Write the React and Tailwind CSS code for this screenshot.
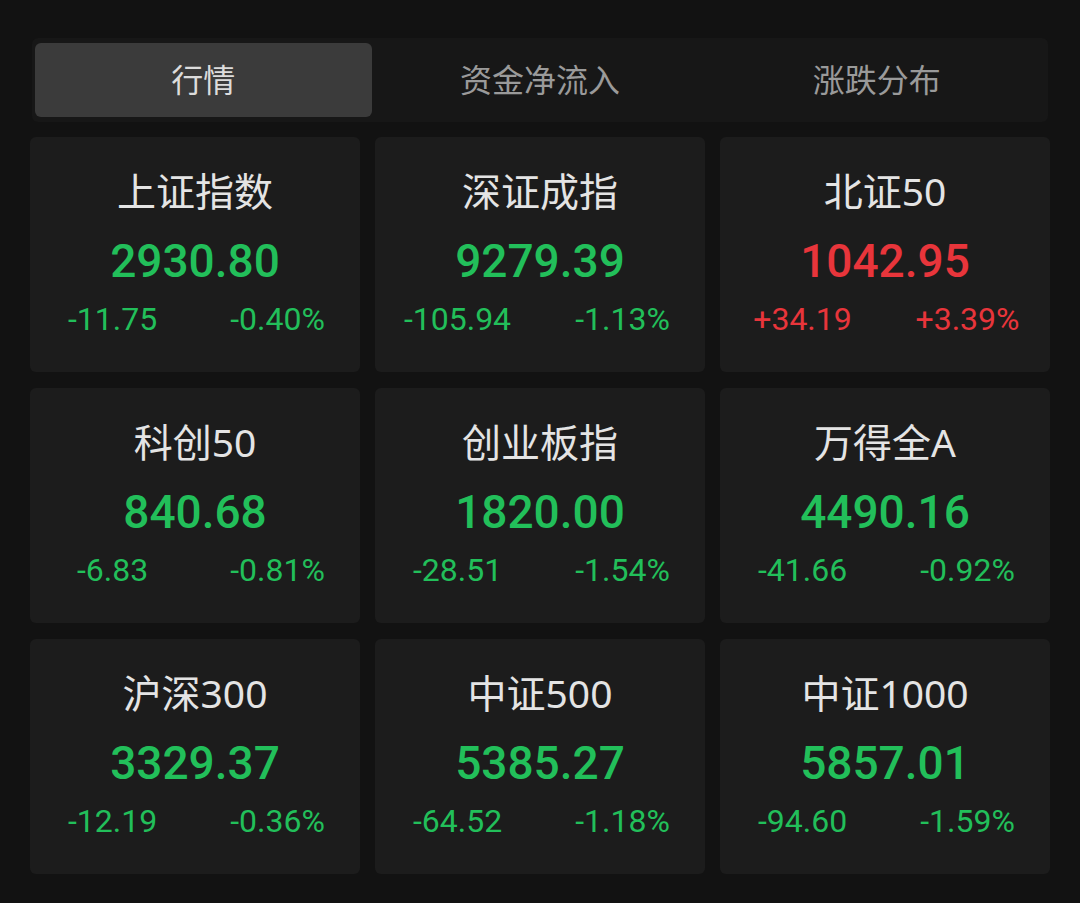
import React from "react";

const items = [
  { name: "上证指数", value: "2930.80", chg: "-11.75", pct: "-0.40%", up: false },
  { name: "深证成指", value: "9279.39", chg: "-105.94", pct: "-1.13%", up: false },
  { name: "北证50", value: "1042.95", chg: "+34.19", pct: "+3.39%", up: true },
  { name: "科创50", value: "840.68", chg: "-6.83", pct: "-0.81%", up: false },
  { name: "创业板指", value: "1820.00", chg: "-28.51", pct: "-1.54%", up: false },
  { name: "万得全A", value: "4490.16", chg: "-41.66", pct: "-0.92%", up: false },
  { name: "沪深300", value: "3329.37", chg: "-12.19", pct: "-0.36%", up: false },
  { name: "中证500", value: "5385.27", chg: "-64.52", pct: "-1.18%", up: false },
  { name: "中证1000", value: "5857.01", chg: "-94.60", pct: "-1.59%", up: false },
];

const cjk = { fontFamily: '"Noto Sans", "Noto Sans CJK SC", sans-serif' };
const num = { fontFamily: 'Roboto, "Noto Sans", sans-serif' };

function Card({ it }) {
  const color = it.up ? "text-[#e8353b]" : "text-[#22bf5a]";
  return (
    <div className="h-[235px] rounded-[6px] bg-[#1c1c1c] flex flex-col items-stretch">
      <div
        className="mt-[31px] h-[46px] leading-[46px] text-center text-[39px] text-[#e4e4e4]"
        style={cjk}
      >
        {it.name}
      </div>
      <div
        className={`mt-[19px] h-[56px] leading-[56px] text-center text-[46px] font-medium ${color}`}
        style={num}
      >
        {it.value}
      </div>
      <div className={`mt-[12px] grid grid-cols-2 h-[36px] leading-[36px] text-[32px] font-normal ${color}`} style={num}>
        <div className="text-center">{it.chg}</div>
        <div className="text-center">{it.pct}</div>
      </div>
    </div>
  );
}

export default function App() {
  const tabs = ["行情", "资金净流入", "涨跌分布"];
  return (
    <div className="w-[1080px] h-[903px] bg-[#121212] overflow-hidden">
      <div className="pt-[38px] px-[30px]">
        <div className="mx-[2px] h-[84px] bg-[#171717] rounded-[6px] px-[3px] py-[5px] grid grid-cols-3">
          {tabs.map((t, i) => (
            <div
              key={t}
              className={`flex items-center justify-center rounded-[6px] text-[32px] ${
                i === 0 ? "bg-[#3b3b3b] text-[#dcdcdc]" : "text-[#9a9a9a]"
              }`}
              style={cjk}
            >
              {t}
            </div>
          ))}
        </div>
        <div className="mt-[15px] grid grid-cols-3 gap-x-[15px] gap-y-[16px]">
          {items.map((it) => (
            <Card key={it.name} it={it} />
          ))}
        </div>
      </div>
    </div>
  );
}
